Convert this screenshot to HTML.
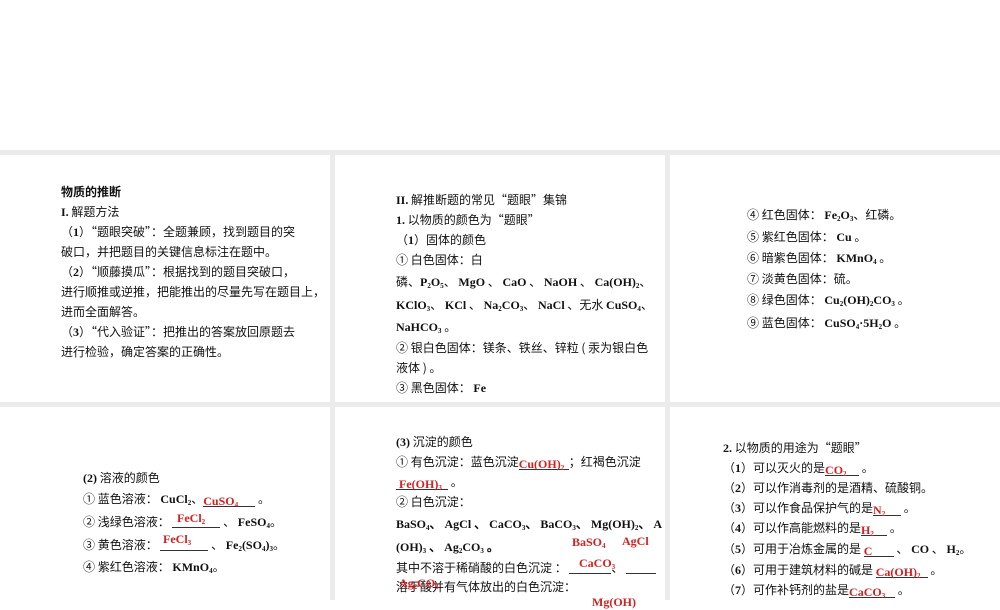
<!DOCTYPE html>
<html><head><meta charset="utf-8"><style>
body{margin:0;width:1000px;height:600px;position:relative;background:#fff;overflow:hidden;font-family:"Liberation Serif","Noto Sans CJK SC",serif;font-size:12px;font-weight:bold;color:#111}
.g{position:absolute;background:#ebebeb}
.t{position:absolute;white-space:nowrap;line-height:14px}
.r{color:#d42020;font-weight:bold}
sub{font-size:7px;vertical-align:-2px}
.u{display:inline-block;border-bottom:1px solid #333;height:12px;vertical-align:-2px}
.rt{position:absolute;color:#d42020;font-family:"Liberation Serif",serif;font-weight:bold;font-size:12px}
.c{font-family:"Noto Sans CJK SC",sans-serif;font-weight:normal}
.c b,.L{font-family:"Liberation Serif",serif;font-weight:bold}
</style></head><body>
<div class="g" style="left:0;top:150px;width:1000px;height:5px"></div>
<div class="g" style="left:0;top:402px;width:1000px;height:5px"></div>
<div class="g" style="left:330px;top:150px;width:5px;height:450px"></div>
<div class="g" style="left:665px;top:150px;width:5px;height:450px"></div>

<div class="c">
<div class="t" style="left:61px;top:185px;font-weight:bold">物质的推断</div>
<div class="t" style="left:61px;top:205px"><b>I.</b> 解题方法</div>
<div class="t" style="left:61px;top:225px">（<b>1</b>）“题眼突破”：全题兼顾，找到题目的突</div>
<div class="t" style="left:61px;top:245px">破口，并把题目的关键信息标注在题中。</div>
<div class="t" style="left:61px;top:265px">（<b>2</b>）“顺藤摸瓜”：根据找到的题目突破口，</div>
<div class="t" style="left:61px;top:285px">进行顺推或逆推，把能推出的尽量先写在题目上，</div>
<div class="t" style="left:61px;top:305px">进而全面解答。</div>
<div class="t" style="left:61px;top:325px">（<b>3</b>）“代入验证”：把推出的答案放回原题去</div>
<div class="t" style="left:61px;top:345px">进行检验，确定答案的正确性。</div>

<div class="t" style="left:396px;top:193px"><b>II.</b> 解推断题的常见“题眼”集锦</div>
<div class="t" style="left:396px;top:213px"><b>1.</b> 以物质的颜色为“题眼”</div>
<div class="t" style="left:396px;top:233px">（<b>1</b>）固体的颜色</div>
<div class="t" style="left:396px;top:253px">① 白色固体：白</div>
<div class="t" style="left:396px;top:275px">磷、<b>P<sub>2</sub>O<sub>5</sub></b>、 <b>MgO</b> 、 <b>CaO</b> 、 <b>NaOH</b> 、 <b>Ca(OH)<sub>2</sub></b>、</div>
<div class="t" style="left:396px;top:298px"><b>KClO<sub>3</sub></b>、 <b>KCl</b> 、 <b>Na<sub>2</sub>CO<sub>3</sub></b>、 <b>NaCl</b> 、无水 <b>CuSO<sub>4</sub></b>、</div>
<div class="t" style="left:396px;top:320px"><b>NaHCO<sub>3</sub></b> 。</div>
<div class="t" style="left:396px;top:341px">② 银白色固体：镁条、铁丝、锌粒 ( 汞为银白色</div>
<div class="t" style="left:396px;top:361px">液体 ) 。</div>
<div class="t" style="left:396px;top:381px">③ 黑色固体： <b>Fe</b></div>

<div class="t" style="left:747px;top:208px">④ 红色固体： <b>Fe<sub>2</sub>O<sub>3</sub></b>、红磷。</div>
<div class="t" style="left:747px;top:230px">⑤ 紫红色固体： <b>Cu</b> 。</div>
<div class="t" style="left:747px;top:251px">⑥ 暗紫色固体： <b>KMnO<sub>4</sub></b> 。</div>
<div class="t" style="left:747px;top:272px">⑦ 淡黄色固体：硫。</div>
<div class="t" style="left:747px;top:293px">⑧ 绿色固体： <b>Cu<sub>2</sub>(OH)<sub>2</sub>CO<sub>3</sub></b> 。</div>
<div class="t" style="left:747px;top:316px">⑨ 蓝色固体： <b>CuSO<sub>4</sub>·5H<sub>2</sub>O</b> 。</div>

<div class="t" style="left:83px;top:471px"><b>(2)</b> 溶液的颜色</div>
<div class="t" style="left:83px;top:492px">① 蓝色溶液： <b>CuCl<sub>2</sub></b>、<span class="u" style="width:52px"><span class="r L">CuSO<sub>4</sub></span></span> 。</div>
<div class="t" style="left:83px;top:515px">② 浅绿色溶液： <span class="u" style="width:48px"></span> 、 <b>FeSO<sub>4</sub></b>。</div>
<div class="rt" style="left:177px;top:511px">FeCl<sub>2</sub></div>
<div class="t" style="left:83px;top:538px">③ 黄色溶液： <span class="u" style="width:48px"></span> 、 <b>Fe<sub>2</sub>(SO<sub>4</sub>)<sub>3</sub></b>。</div>
<div class="rt" style="left:163px;top:532px">FeCl<sub>3</sub></div>
<div class="t" style="left:83px;top:560px">④ 紫红色溶液： <b>KMnO<sub>4</sub></b>。</div>

<div class="t" style="left:396px;top:435px"><b>(3)</b> 沉淀的颜色</div>
<div class="t" style="left:396px;top:455px">① 有色沉淀：蓝色沉淀<span class="u" style="width:50px"><span class="r L">Cu(OH)<sub>2</sub></span></span>；红褐色沉淀</div>
<div class="t" style="left:396px;top:475px"><span class="u" style="width:52px"><span class="r L">&nbsp;Fe(OH)<sub>3</sub></span></span> 。</div>
<div class="t" style="left:396px;top:495px">② 白色沉淀：</div>
<div class="t L" style="left:396px;top:517px">BaSO<sub>4</sub>、 AgCl 、 CaCO<sub>3</sub>、 BaCO<sub>3</sub>、 Mg(OH)<sub>2</sub>、 A</div>
<div class="t L" style="left:396px;top:540px">(OH)<sub>3</sub> 、 Ag<sub>2</sub>CO<sub>3</sub> 。</div>
<div class="rt" style="left:572px;top:535px">BaSO<sub>4</sub></div>
<div class="rt" style="left:622px;top:534px">AgCl</div>
<div class="t" style="left:396px;top:561px">其中不溶于稀硝酸的白色沉淀 ： <span class="u" style="width:42px"></span>、 <span class="u" style="width:30px"></span></div>
<div class="rt" style="left:579px;top:556px">CaCO<sub>3</sub></div>
<div class="t" style="left:396px;top:580px">溶于酸并有气体放出的白色沉淀：</div>
<div class="rt" style="left:399px;top:576px">Ag<sub>2</sub>CO<sub>3</sub></div>
<div class="rt" style="left:592px;top:595px">Mg(OH)</div>

<div class="t" style="left:723px;top:441px"><b>2.</b> 以物质的用途为“题眼”</div>
<div class="t" style="left:723px;top:461px">（<b>1</b>）可以灭火的是<span class="u" style="width:34px"><span class="r L">CO<sub>2</sub></span></span> 。</div>
<div class="t" style="left:723px;top:481px">（<b>2</b>）可以作消毒剂的是酒精、硫酸铜。</div>
<div class="t" style="left:723px;top:501px">（<b>3</b>）可以作食品保护气的是<span class="u" style="width:28px"><span class="r L">N<sub>2</sub></span></span> 。</div>
<div class="t" style="left:723px;top:521px">（<b>4</b>）可以作高能燃料的是<span class="u" style="width:26px"><span class="r L">H<sub>2</sub></span></span> 。</div>
<div class="t" style="left:723px;top:542px">（<b>5</b>）可用于冶炼金属的是 <span class="u" style="width:30px"><span class="r L">C</span></span> 、 <b>CO</b> 、 <b>H<sub>2</sub></b>。</div>
<div class="t" style="left:723px;top:563px">（<b>6</b>）可用于建筑材料的碱是 <span class="u" style="width:52px"><span class="r L">Ca(OH)<sub>2</sub></span></span> 。</div>
<div class="t" style="left:723px;top:583px">（<b>7</b>）可作补钙剂的盐是<span class="u" style="width:46px"><span class="r L">CaCO<sub>3</sub></span></span> 。</div>
</div>
</body></html>
